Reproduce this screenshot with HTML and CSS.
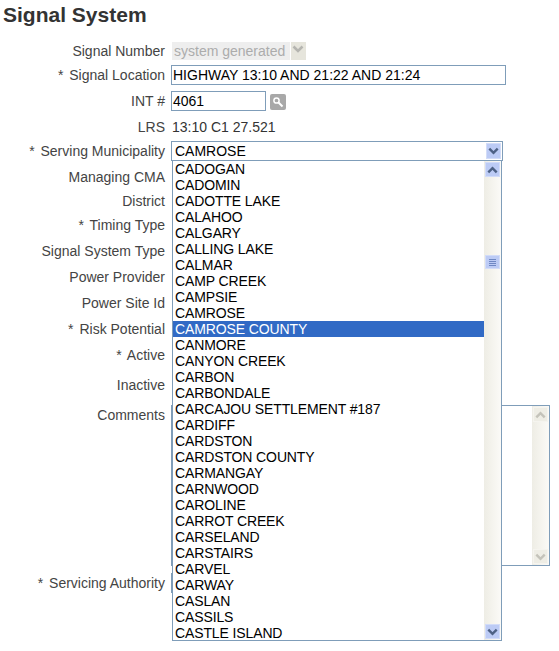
FILE: index.html
```html
<!DOCTYPE html>
<html lang="en">
<head>
    <meta charset="UTF-8">
    <title>Signal System</title>
    <link rel="stylesheet" href="styles.css">
</head>
<body>
<svg class="defs" width="0" height="0">
    <symbol id="up" viewBox="0 0 14 14"><path d="M2.5 9.5 L7 5 L11.5 9.5" fill="none" stroke-width="2.6"/></symbol>
    <symbol id="down" viewBox="0 0 14 14"><path d="M2.5 4.5 L7 9 L11.5 4.5" fill="none" stroke-width="2.6"/></symbol>
</svg>
<h1 class="title">Signal System</h1>
<div class="form">
    <div class="row tight">
        <label>Signal Number</label>
        <div class="disabled-select">
            <span class="disabled-value">system generated</span>
            <span class="disabled-btn"><svg width="14" height="14"><use href="#down"/></svg></span>
        </div>
    </div>
    <div class="row">
        <label><span class="req">*</span> Signal Location</label>
        <div class="field location">HIGHWAY 13:10 AND 21:22 AND 21:24</div>
    </div>
    <div class="row">
        <label>INT #</label>
        <div class="field int">4061</div>
        <span class="search-btn">
            <svg width="12" height="12" viewBox="0 0 12 12"><circle cx="4.5" cy="4.5" r="2.6" fill="none" stroke="#fff" stroke-width="1.5"/><path d="M6.5 6.5 L10.5 10.5" stroke="#fff" stroke-width="2"/></svg>
        </span>
    </div>
    <div class="row tight">
        <label>LRS</label>
        <span class="static">13:10 C1 27.521</span>
    </div>
    <div class="row">
        <label><span class="req">*</span> Serving Municipality</label>
        <div class="combo">
            <div class="combo-value">CAMROSE<span class="btn combo-btn"><svg width="14" height="14"><use href="#down"/></svg></span></div>
            <div class="dropdown">
                <ul class="options">
                    <li>CADOGAN</li>
                    <li>CADOMIN</li>
                    <li>CADOTTE LAKE</li>
                    <li>CALAHOO</li>
                    <li>CALGARY</li>
                    <li>CALLING LAKE</li>
                    <li>CALMAR</li>
                    <li>CAMP CREEK</li>
                    <li>CAMPSIE</li>
                    <li>CAMROSE</li>
                    <li class="current">CAMROSE COUNTY</li>
                    <li>CANMORE</li>
                    <li>CANYON CREEK</li>
                    <li>CARBON</li>
                    <li>CARBONDALE</li>
                    <li>CARCAJOU SETTLEMENT #187</li>
                    <li>CARDIFF</li>
                    <li>CARDSTON</li>
                    <li>CARDSTON COUNTY</li>
                    <li>CARMANGAY</li>
                    <li>CARNWOOD</li>
                    <li>CAROLINE</li>
                    <li>CARROT CREEK</li>
                    <li>CARSELAND</li>
                    <li>CARSTAIRS</li>
                    <li>CARVEL</li>
                    <li>CARWAY</li>
                    <li>CASLAN</li>
                    <li>CASSILS</li>
                    <li>CASTLE ISLAND</li>
                </ul>
                <div class="scrollbar">
                    <span class="btn"><svg width="14" height="14"><use href="#up"/></svg></span>
                    <span class="thumb"><i></i><i></i><i></i><i></i></span>
                    <span class="btn to-end"><svg width="14" height="14"><use href="#down"/></svg></span>
                </div>
            </div>
        </div>
    </div>
    <div class="row tight"><label>Managing CMA</label></div>
    <div class="row tight"><label>District</label></div>
    <div class="row"><label><span class="req">*</span> Timing Type</label></div>
    <div class="row"><label>Signal System Type</label></div>
    <div class="row"><label>Power Provider</label></div>
    <div class="row"><label>Power Site Id</label></div>
    <div class="row"><label><span class="req">*</span> Risk Potential</label></div>
    <div class="row wide"><label><span class="req">*</span> Active</label></div>
    <div class="row wide"><label>Inactive</label></div>
    <div class="row comments-row">
        <label>Comments</label>
        <div class="comments">
            <div class="scrollbar off">
                <span class="btn"><svg width="14" height="14"><use href="#up"/></svg></span>
                <span class="btn to-end"><svg width="14" height="14"><use href="#down"/></svg></span>
            </div>
        </div>
    </div>
    <div class="row authority">
        <label><span class="req">*</span> Servicing Authority</label>
        <div class="field authority-field"></div>
    </div>
</div>
</body>
</html>
```

FILE: styles.css
```css
*{
    margin: 0;
    padding: 0;
    box-sizing: border-box;
    list-style: none;
}

body{
    min-height: 100vh;
    font-family: "Liberation Sans", Arial, sans-serif;
    font-size: 14px;
    color: #000;
    background: #fff;
}
.defs{
    position: absolute;
}

.title{
    height: 30px;
    line-height: 30px;
    padding-left: 3px;
    font-size: 21px;
    font-weight: bold;
    color: #333;
}

.form{
    padding-top: 11px;
}
.row{
    display: flex;
    align-items: center;
    gap: 6px;
    height: 20px;
    margin-bottom: 6px;
}
.row.tight{
    margin-bottom: 4px;
}
.row.wide{
    margin-bottom: 10px;
}
.row label{
    flex: none;
    width: 165px;
    text-align: right;
    color: #444;
}
.req{
    margin-right: 2px;
}

.field{
    height: 20px;
    line-height: 18px;
    padding-left: 1px;
    border: 1px solid #7f9db9;
    background: #fff;
}
.location{
    width: 335px;
}
.int{
    width: 95px;
}
.search-btn{
    display: flex;
    justify-content: center;
    align-items: center;
    width: 16px;
    height: 16px;
    margin: 2px 0 0 -2px;
    border-radius: 2px;
    background: #a8a8a8;
}
.static{
    padding-left: 1px;
    color: #333;
}

.disabled-select{
    display: flex;
    gap: 1px;
    height: 18px;
    margin-left: 1px;
}
.disabled-value{
    width: 118px;
    padding-left: 2px;
    line-height: 18px;
    background: #eeeeee;
    color: #acacac;
}
.disabled-btn{
    width: 15px;
    background: #e6e5dc;
    stroke: #b5b5b0;
}

.combo{
    position: relative;
    width: 332px;
    height: 20px;
}
.combo-value{
    display: flex;
    justify-content: space-between;
    align-items: center;
    height: 20px;
    padding: 0 1px 0 3px;
    border: 1px solid #7f9db9;
}
.btn{
    display: flex;
    justify-content: center;
    align-items: center;
    flex: none;
    width: 15px;
    height: 15px;
    background: #bccbf5;
    border: 1px solid #d2dcf8;
    stroke: #4d6185;
}
.combo-btn{
    height: 16px;
}

.dropdown{
    position: absolute;
    z-index: 5;
    top: 20px;
    left: 1px;
    display: flex;
    width: 330px;
    height: 480px;
    border: 1px solid #7f9db9;
    border-top: none;
    background: #fff;
}
.options{
    flex: 1;
}
.options li{
    height: 16px;
    line-height: 16px;
    padding-left: 2px;
    white-space: nowrap;
    letter-spacing: -0.12px;
}
.options .current{
    background: #316ac5;
    color: #fff;
}

.scrollbar{
    display: flex;
    flex-direction: column;
    align-items: center;
    flex: none;
    width: 17px;
    padding: 1px 0;
    background: linear-gradient(to right, #eeede5, #fbfaf7);
}
.thumb{
    display: flex;
    flex-direction: column;
    justify-content: center;
    align-items: center;
    gap: 1px;
    width: 15px;
    height: 14px;
    margin-top: 78px;
    background: #bccbf5;
    border: 1px solid #d2dcf8;
}
.thumb i{
    width: 7px;
    height: 1px;
    background: #6f88c4;
}
.to-end{
    margin-top: auto;
}
.scrollbar.off{
    height: 100%;
    margin-left: auto;
}
.off .btn{
    background: #eeede5;
    border-color: #f5f4ef;
    stroke: #c4c3ba;
}

.comments-row{
    align-items: flex-start;
    height: 161px;
    margin-bottom: 7px;
}
.comments-row label{
    height: 20px;
    line-height: 20px;
}
.comments{
    display: flex;
    width: 379px;
    height: 161px;
    border: 1px solid #7f9db9;
}
.authority-field{
    width: 100px;
}
```
